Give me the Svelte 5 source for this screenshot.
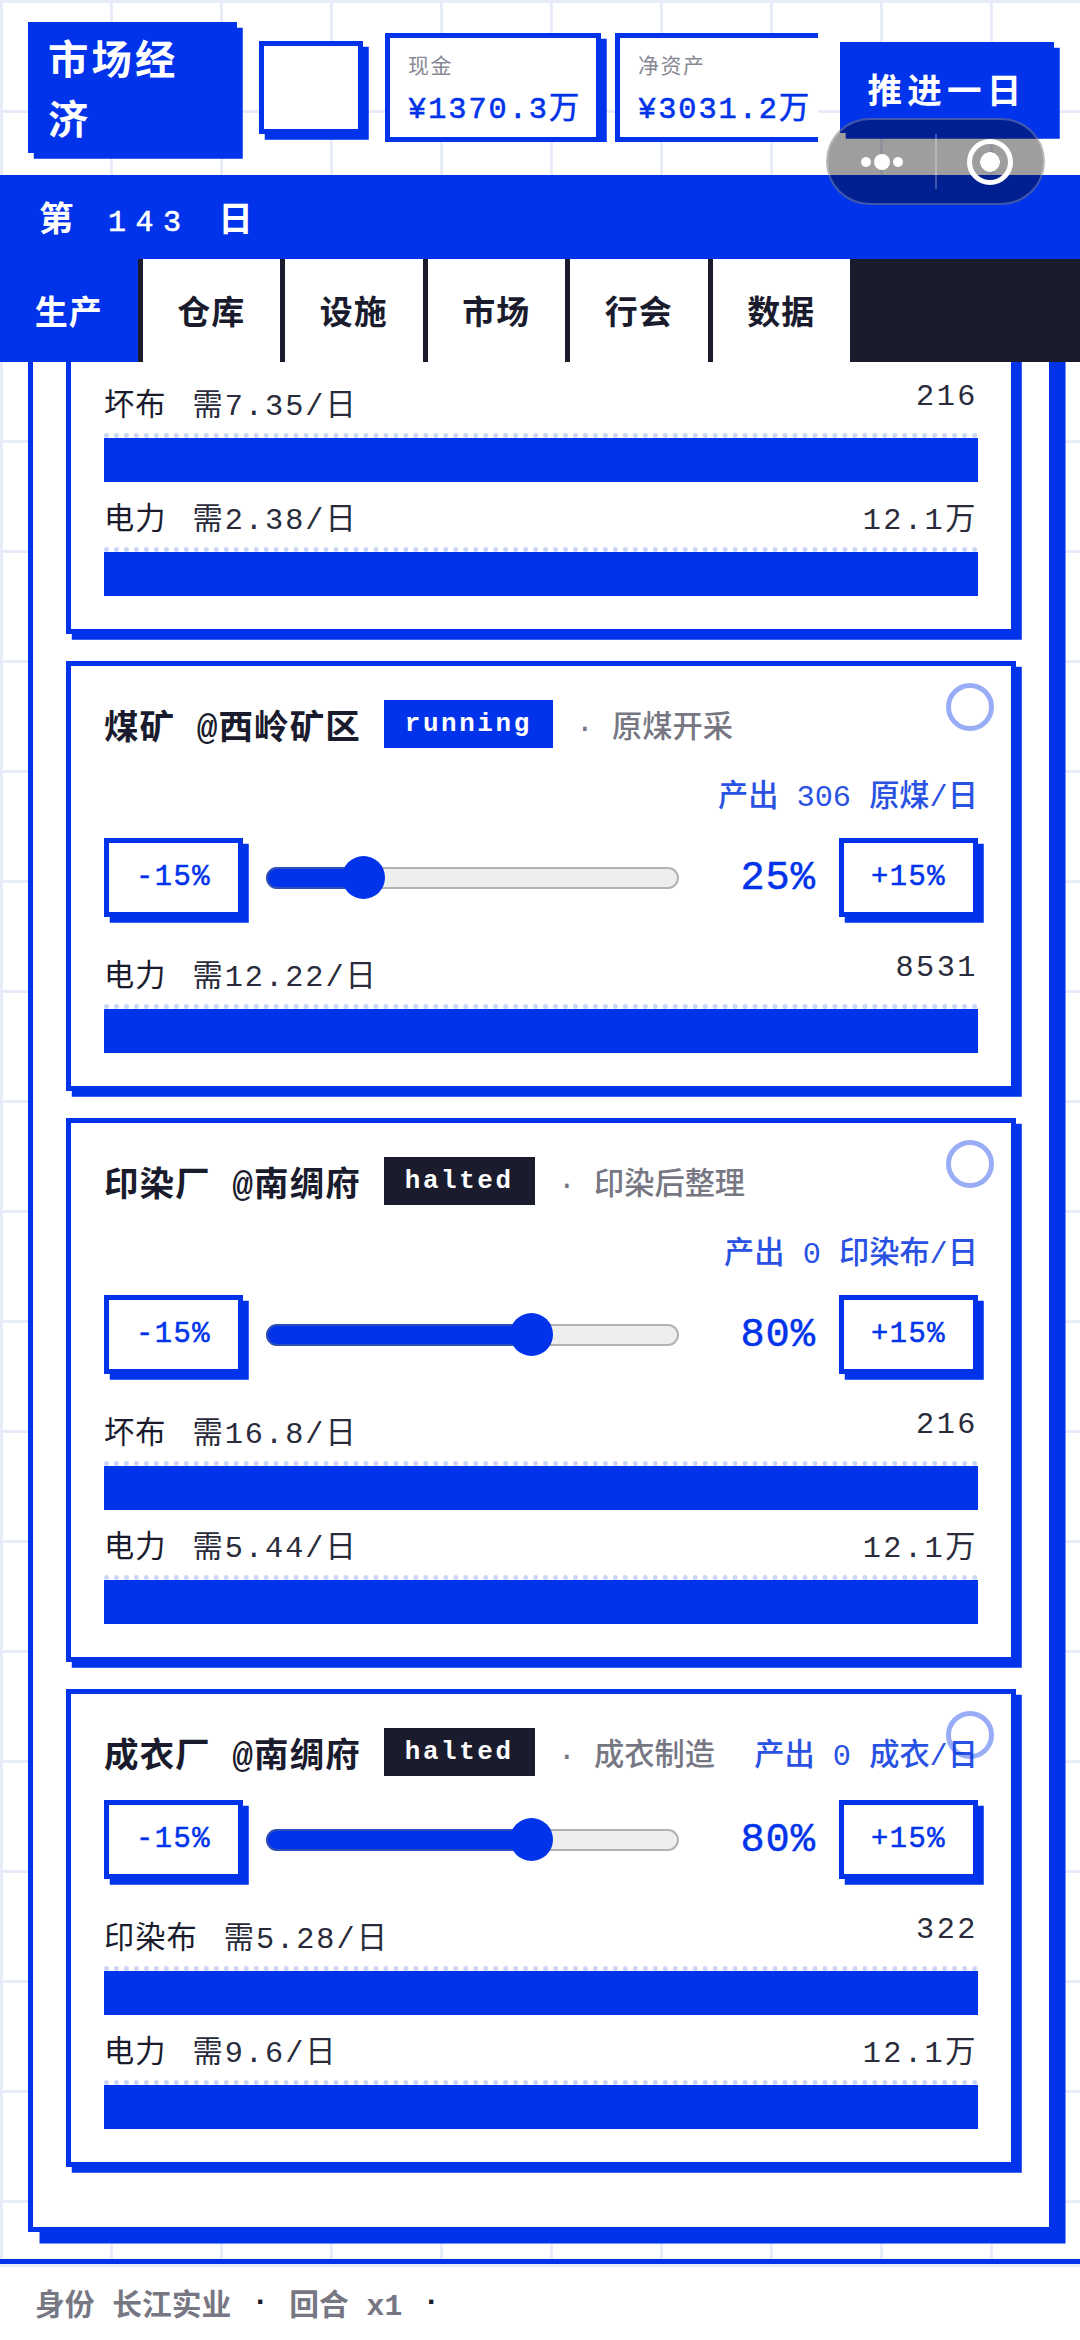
<script>
    const tabs = ["生产", "仓库", "设施", "市场", "行会", "数据"];
    const stats = [
        { label: "现金", value: "¥1370.3万" },
        { label: "净资产", value: "¥3031.2万" },
    ];
    const cards = [
        {
            inputs: [
                { name: "坏布", need: "7.35", stock: "216" },
                { name: "电力", need: "2.38", stock: "12.1万" },
            ],
        },
        {
            name: "煤矿 @西岭矿区",
            status: "running",
            desc: "· 原煤开采",
            out: "306",
            unit: "原煤",
            rate: 25,
            inputs: [{ name: "电力", need: "12.22", stock: "8531" }],
        },
        {
            name: "印染厂 @南绸府",
            status: "halted",
            desc: "· 印染后整理",
            out: "0",
            unit: "印染布",
            rate: 80,
            inputs: [
                { name: "坏布", need: "16.8", stock: "216" },
                { name: "电力", need: "5.44", stock: "12.1万" },
            ],
        },
        {
            name: "成衣厂 @南绸府",
            status: "halted",
            desc: "· 成衣制造",
            out: "0",
            unit: "成衣",
            rate: 80,
            inputs: [
                { name: "印染布", need: "5.28", stock: "322" },
                { name: "电力", need: "9.6", stock: "12.1万" },
            ],
        },
    ];
    // slider runs 0-120, thumb is 43px wide inside the track
    function thumbLeft(rate) {
        return `calc((100% - 43px) * ${rate / 120})`;
    }
</script>

<div class="page">
    <header>
        <div class="logo">市场经济</div>
        <div class="blank"></div>
        <div class="stats">
            {#each stats as { label, value }}
                <div class="stat">
                    <div class="statLabel">{label}</div>
                    <div class="statValue">{value}</div>
                </div>
            {/each}
        </div>
        <button class="advance">推进一日</button>
    </header>

    <div class="dayBar">第 <span class="dayNum">143</span> 日</div>

    <nav>
        {#each tabs as tab, index}
            <div class="tab" class:active={index === 0}>{tab}</div>
        {/each}
    </nav>

    <div class="scroll">
        <div class="panel">
            {#each cards as card}
                <section class="card">
                    {#if card.name}
                        <div class="ring"></div>
                        <div class="head">
                            <span class="name">{card.name}</span>
                            <span class="tag" class:halted={card.status === "halted"}>{card.status}</span>
                            <span class="desc">{card.desc}</span>
                            <span class="output">产出 {card.out} {card.unit}/日</span>
                        </div>
                        <div class="controls">
                            <button class="step">-15%</button>
                            <div class="slider">
                                <div class="fill" style="width: calc({thumbLeft(card.rate)} + 21px)"></div>
                                <div class="thumb" style="left: {thumbLeft(card.rate)}"></div>
                            </div>
                            <div class="rate">{card.rate}%</div>
                            <button class="step">+15%</button>
                        </div>
                    {/if}
                    {#each card.inputs as input}
                        <div class="input">
                            <div class="inputRow">
                                <span class="inputName">{input.name}<span class="need">需{input.need}/日</span></span>
                                <span class="stock">{input.stock}</span>
                            </div>
                            <div class="bar"><div class="barFill" style="width: 100%"></div></div>
                        </div>
                    {/each}
                </section>
            {/each}
        </div>
    </div>

    <footer>
        <span>身份 长江实业</span>
        <span class="dot">·</span>
        <span>回合 x1</span>
        <span class="dot">·</span>
    </footer>

    <div class="capsule">
        <div class="dots"><i></i><b></b><i></i></div>
        <div class="divider"></div>
        <div class="target"><span></span></div>
    </div>
</div>

<style>
    :global(body) {
        margin: 0;
    }
    .page {
        --blue: #0033ea;
        --ink: #1a1c2e;
        position: relative;
        display: flex;
        flex-direction: column;
        width: 1080px;
        height: 2340px;
        overflow: hidden;
        font-family: "Liberation Mono", "Noto Sans CJK SC", monospace;
        color: var(--ink);
        background-color: #fff;
        background-image: linear-gradient(#e8ebfa 3px, transparent 3px),
            linear-gradient(90deg, #e8ebfa 3px, transparent 3px);
        background-size: 110px 110px;
    }
    button {
        font-family: inherit;
        padding: 0;
        cursor: pointer;
    }

    header {
        flex: 0 0 175px;
        display: flex;
        align-items: center;
        gap: 22px;
        padding-left: 28px;
        box-sizing: border-box;
    }
    .logo {
        flex: 0 0 209px;
        box-sizing: border-box;
        height: 131px;
        padding: 11px 20px 0;
        background: var(--blue);
        color: #fff;
        font-size: 40.32px;
        font-weight: 700;
        line-height: 60px;
        letter-spacing: 3.2px;
        box-shadow: 5.76px 5.76px 0 var(--blue);
    }
    .blank {
        flex: 0 0 104px;
        height: 93px;
        box-sizing: border-box;
        background: #fff;
        border: 5px solid var(--blue);
        box-shadow: 5.76px 5.76px 0 var(--blue);
    }
    .stats {
        flex: 0 0 433px;
        height: 109px;
        display: flex;
        gap: 14px;
        overflow: hidden;
    }
    .stat {
        flex: 0 0 auto;
        box-sizing: border-box;
        width: 216px;
        height: 109px;
        padding: 11px 18px 0;
        background: #fff;
        border: 5px solid var(--blue);
        box-shadow: 5.76px 5.76px 0 var(--blue);
    }
    .statLabel {
        font-size: 21px;
        letter-spacing: 1.5px;
        color: #888894;
    }
    .statValue {
        margin-top: 4px;
        font-size: 30.24px;
        letter-spacing: 2px;
        -webkit-text-stroke: 0.6px var(--blue);
        color: var(--blue);
        white-space: nowrap;
    }
    .advance {
        flex: 0 0 214px;
        height: 91px;
        border: 0;
        background: var(--blue);
        color: #fff;
        font-size: 34.56px;
        font-weight: 700;
        letter-spacing: 5.18px;
        box-shadow: 5.76px 5.76px 0 var(--blue);
    }

    .dayBar {
        flex: 0 0 84px;
        min-height: 0;
        overflow: hidden;
        padding-left: 39px;
        background: var(--blue);
        color: #fff;
        font-size: 34.56px;
        font-weight: 700;
        line-height: 94px;
        letter-spacing: 6.9px;
        white-space: pre;
    }
    .dayNum {
        font-size: 30px;
        font-weight: 400;
        letter-spacing: 9.5px;
        -webkit-text-stroke: 0.6px #fff;
    }

    nav {
        flex: 0 0 103px;
        position: relative;
        z-index: 2;
        display: flex;
        background: var(--ink);
    }
    .tab {
        box-sizing: content-box;
        width: 68px;
        padding: 0 34.75px 2px;
        display: flex;
        align-items: center;
        justify-content: center;
        background: #fff;
        border-right: 5px solid var(--ink);
        font-size: 33px;
        font-weight: 700;
        letter-spacing: 1px;
        white-space: nowrap;
    }
    .tab:last-child {
        border-right: 0;
    }
    .tab.active {
        background: var(--blue);
        color: #fff;
    }

    .scroll {
        flex: 1;
        min-height: 0;
        overflow: hidden;
    }
    .panel {
        box-sizing: border-box;
        width: 1026px;
        margin: -70px 0 0 28px;
        padding: 33px;
        background: #fff;
        border: 5px solid var(--blue);
        box-shadow: 11.52px 11.52px 0 var(--blue);
    }
    .card {
        position: relative;
        margin-bottom: 27px;
        padding: 33px;
        background: #fff;
        border: 5px solid var(--blue);
        box-shadow: 5.76px 5.76px 0 var(--blue);
    }
    .ring {
        position: absolute;
        top: 17px;
        right: 17px;
        width: 48px;
        height: 48px;
        box-sizing: border-box;
        border: 5px solid rgba(0, 51, 234, 0.4);
        border-radius: 50%;
    }
    .head {
        display: flex;
        flex-wrap: wrap;
        align-items: center;
        gap: 22px 23px;
        margin-bottom: 23px;
    }
    .name {
        font-size: 34.56px;
        font-weight: 700;
        letter-spacing: 1px;
    }
    .tag {
        padding: 0 21px;
        height: 48px;
        display: flex;
        align-items: center;
        background: var(--blue);
        color: #fff;
        font-size: 25.92px;
        font-weight: 700;
        letter-spacing: 2.6px;
    }
    .tag.halted {
        background: var(--ink);
    }
    .desc {
        font-size: 30.24px;
        font-weight: 500;
        color: #777784;
    }
    .output {
        margin-left: auto;
        font-size: 30.24px;
        font-weight: 500;
        color: #2a52e2;
    }
    .controls {
        display: flex;
        align-items: center;
        gap: 23px;
        margin-bottom: 34px;
    }
    .step {
        flex: 0 0 139px;
        height: 79px;
        box-sizing: border-box;
        background: #fff;
        border: 5px solid var(--blue);
        box-shadow: 5.76px 5.76px 0 var(--blue);
        color: var(--blue);
        font-size: 28.8px;
        letter-spacing: 1.44px;
        -webkit-text-stroke: 0.5px var(--blue);
    }
    .slider {
        flex: 1;
        position: relative;
        height: 22px;
        box-sizing: border-box;
        background: #eee;
        border: 2px solid #b2b2b2;
        border-radius: 11px;
    }
    .fill {
        position: absolute;
        left: -2px;
        top: -2px;
        height: 22px;
        box-sizing: border-box;
        background: var(--blue);
        border: 2px solid #2f4fb8;
        border-radius: 11px 0 0 11px;
    }
    .thumb {
        position: absolute;
        top: -12.5px;
        width: 43px;
        height: 43px;
        margin-left: -2px;
        border-radius: 50%;
        background: var(--blue);
    }
    .rate {
        flex: 0 0 114px;
        text-align: right;
        font-size: 40.32px;
        letter-spacing: 1px;
        -webkit-text-stroke: 0.5px var(--blue);
        color: var(--blue);
    }
    .input {
        margin-top: 12px;
    }
    .inputRow {
        display: flex;
        justify-content: space-between;
        margin-bottom: 9px;
        font-size: 30.24px;
    }
    .inputName {
        letter-spacing: 1px;
    }
    .need {
        margin-left: 26px;
        letter-spacing: 2px;
        color: #2a2c3c;
    }
    .stock {
        letter-spacing: 2.5px;
        color: #2a2c3c;
    }
    .bar {
        border-top: 5px dotted #ccd6f6;
    }
    .barFill {
        height: 44px;
        background: var(--blue);
    }

    footer {
        flex: 0 0 76px;
        display: flex;
        align-items: center;
        gap: 20px;
        padding-left: 35px;
        background: #fff;
        border-top: 5px solid var(--blue);
        box-shadow: inset 0 3px 0 #e8ebfa;
        font-size: 29.76px;
        font-weight: 700;
        color: #777784;
    }
    .dot {
        color: var(--ink);
    }

    .capsule {
        position: absolute;
        z-index: 3;
        left: 826px;
        top: 118px;
        width: 219px;
        height: 87px;
        box-sizing: border-box;
        display: flex;
        align-items: center;
        background: rgba(0, 0, 0, 0.38);
        border: 2px solid rgba(255, 255, 255, 0.25);
        border-radius: 44px;
    }
    .dots {
        width: 107px;
        display: flex;
        align-items: center;
        justify-content: center;
        gap: 3px;
    }
    .dots i {
        width: 10px;
        height: 10px;
        border-radius: 50%;
        background: #fff;
    }
    .dots b {
        width: 16px;
        height: 16px;
        border-radius: 50%;
        background: #fff;
    }
    .divider {
        width: 2px;
        height: 55px;
        background: rgba(255, 255, 255, 0.25);
    }
    .target {
        flex: 1;
        display: flex;
        align-items: center;
        justify-content: center;
    }
    .target span {
        box-sizing: border-box;
        width: 46px;
        height: 46px;
        border: 5px solid #fff;
        border-radius: 50%;
        background: radial-gradient(circle, #fff 9.5px, transparent 10px);
    }
</style>
